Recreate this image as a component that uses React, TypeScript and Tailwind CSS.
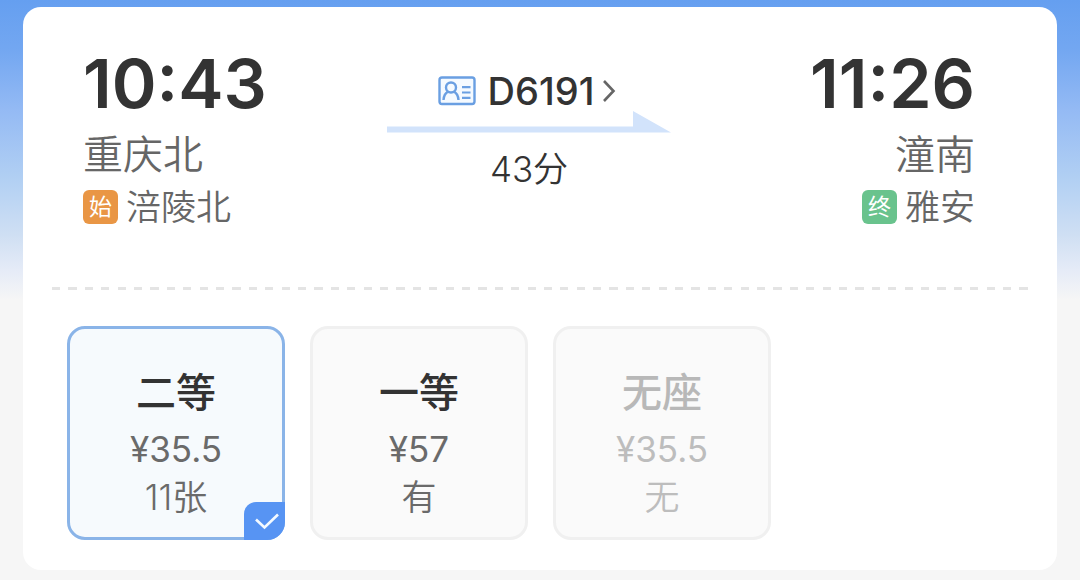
import { useState } from "react";

type Seat = { name: string; price: string; left: string; soldOut?: boolean };

const seats: Seat[] = [
  { name: "二等", price: "¥35.5", left: "11张" },
  { name: "一等", price: "¥57", left: "有" },
  { name: "无座", price: "¥35.5", left: "无", soldOut: true },
];

function IdCardIcon() {
  return (
    <svg width="38" height="30" viewBox="0 0 38 30" fill="none" stroke="#6a9fe2" strokeWidth="2.4" aria-hidden="true">
      <rect x="1.5" y="1.5" width="35" height="26.5" rx="2.5" fill="#f5faff" />
      <circle cx="13" cy="11.5" r="5" />
      <path d="M5.500 24c.3-4.800 2-7.200 4.800-8.400M20.500 24c-.3-4.800-2-7.200-4.800-8.400" />
      <path d="M24 11.200h8.500M24 16.500h8.500M24 21.800h8.500" strokeWidth="2.2" />
    </svg>
  );
}

function SeatOption({ seat, selected, onSelect }: { seat: Seat; selected: boolean; onSelect: () => void }) {
  const frame = selected ? "border-[#8ab4e8] bg-[#f6fafd]" : "border-[#f0f0f0] bg-[#fafafa]";
  const title = seat.soldOut ? "text-[#b8b8b8]" : "text-[#333333]";
  const detail = seat.soldOut ? "text-[#bdbdbd]" : "text-[#6a6a6a]";
  return (
    <button
      type="button"
      aria-pressed={selected}
      disabled={seat.soldOut}
      onClick={onSelect}
      className={`relative flex w-[218px] flex-col items-center rounded-[18px] border-3 pt-10 pb-4 ${frame}`}
    >
      <span className={`text-[40px] leading-12 font-medium ${title}`}>{seat.name}</span>
      <span className={`mt-2 text-[35px] leading-12 ${detail}`}>{seat.price}</span>
      <span className={`text-[35px] leading-12 font-[350] ${detail}`}>{seat.left}</span>
      {selected && (
        <span className="absolute -right-[3px] -bottom-[3px] flex h-[38px] w-[41px] items-center justify-center rounded-tl-xl rounded-br-[18px] bg-[#5794f3]">
          <svg width="26" height="20" viewBox="0 0 26 20" fill="none" stroke="#f4faff" strokeWidth="2.600" className="ml-1" aria-hidden="true">
            <path d="M2 8.500l8.500 8L24 3.500" />
          </svg>
        </span>
      )}
    </button>
  );
}

export default function App() {
  const [selected, setSelected] = useState(0);
  return (
    <main className="min-h-screen bg-[#f6f6f6] bg-[linear-gradient(to_bottom,#659ff0_0px,#73a7f1_50px,#94baf4_110px,#b2d0f3_180px,#cfdff3_235px,#e5ebf7_270px,#f6f6f6_300px)] px-[23px] pt-[7px] pb-[10px] font-['Inter','Noto_Sans_CJK_SC',sans-serif] text-[#333333]">
      <article className="rounded-[18px] bg-white pb-[30px]">
        <header className="grid grid-cols-[1fr_auto_1fr] pt-10 pr-[82px] pl-[60px]">
          <section>
            <time className="block text-[68px] leading-[72px] font-semibold">10:43</time>
            <h2 className="mt-2 text-[40px] leading-14 font-[350] text-[#666666]">重庆北</h2>
            <p className="flex items-center gap-2 text-[35px] leading-12 font-[350] text-[#666666]">
              <span className="flex h-[34px] w-[35px] items-center justify-center rounded-md bg-[#e99645] text-[23px] font-normal text-white">始</span>
              涪陵北
            </p>
          </section>

          <section className="flex flex-col items-center pt-5">
            <a href="#train" className="mr-1 flex items-center text-[38px] leading-12 font-medium">
              <IdCardIcon />
              <span className="mr-2 ml-3">D6191</span>
              <svg width="14" height="24" viewBox="0 0 14 24" fill="none" stroke="#666666" strokeWidth="2.600" aria-hidden="true">
                <path d="M2 2l9.500 10L2 22" />
              </svg>
            </a>
            <svg width="284" height="22" viewBox="0 0 284 22" className="-mt-1" aria-hidden="true">
              <path d="M0 15.500H246V0L284 21.500H0Z" fill="#d2e3fb" />
            </svg>
            <p className="mt-3 text-[35px] leading-12 font-[350]">43分</p>
          </section>

          <section className="flex flex-col items-end">
            <time className="block text-[68px] leading-[72px] font-semibold">11:26</time>
            <h2 className="mt-2 text-[40px] leading-14 font-[350] text-[#666666]">潼南</h2>
            <p className="flex items-center gap-2 text-[35px] leading-12 font-[350] text-[#666666]">
              <span className="flex h-[34px] w-[35px] items-center justify-center rounded-md bg-[#69c38d] text-[23px] font-normal text-white">终</span>
              雅安
            </p>
          </section>
        </header>

        <hr className="mx-[29px] mt-14 h-[3px] border-0 bg-[repeating-linear-gradient(to_right,#e4e4e4_0%,#e4e4e4_0.84%,transparent_0.84%,transparent_1.68%)]" />

        <div role="group" aria-label="席别" className="mt-9 flex flex-wrap gap-[25px] px-11">
          {seats.map((seat, i) => (
            <SeatOption key={seat.name} seat={seat} selected={selected === i} onSelect={() => setSelected(i)} />
          ))}
        </div>
      </article>
    </main>
  );
}
